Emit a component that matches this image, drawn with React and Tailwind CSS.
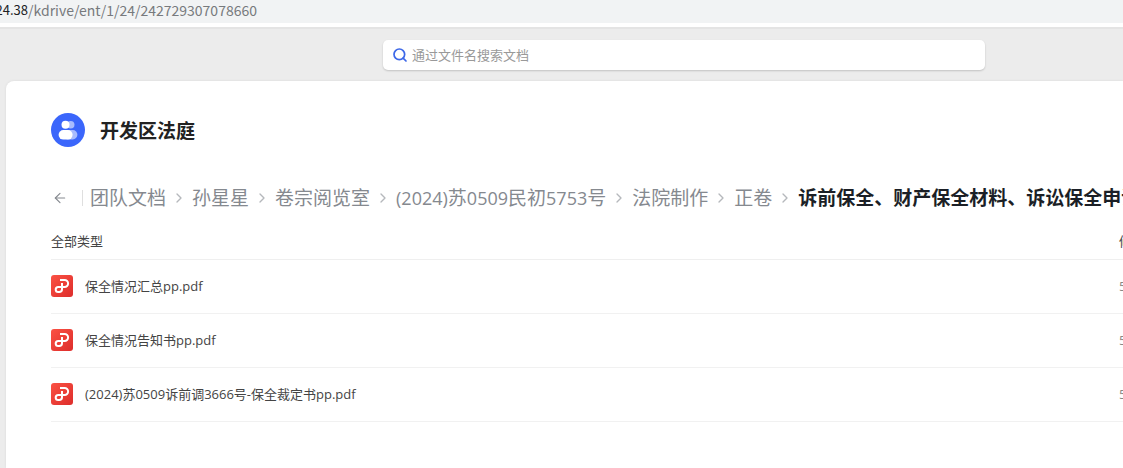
import { Fragment } from "react";
import { ArrowLeft, ChevronRight, Search } from "lucide-react";

const crumbs = ["团队文档", "孙星星", "卷宗阅览室", "(2024)苏0509民初5753号", "法院制作", "正卷"];

const files = [
  { name: "保全情况汇总pp.pdf", modified: "5" },
  { name: "保全情况告知书pp.pdf", modified: "5" },
  { name: "(2024)苏0509诉前调3666号-保全裁定书pp.pdf", modified: "5" },
];

function TeamAvatar() {
  return (
    <svg viewBox="0 0 34 34" className="h-[34px] w-[34px] shrink-0" aria-hidden="true">
      <circle cx="17" cy="17" r="17" fill="#3b66fb" />
      <g fill="#a9bcfd">
        <circle cx="19.7" cy="11.7" r="3.8" />
        <rect x="12" y="17" width="14.4" height="9.4" rx="4.7" />
      </g>
      <g fill="#fff">
        <circle cx="14.5" cy="11.7" r="4" />
        <rect x="7.6" y="17" width="14" height="9.6" rx="4.8" />
      </g>
    </svg>
  );
}

function PdfIcon() {
  return (
    <svg viewBox="0 0 22 22" className="h-[22px] w-[22px] shrink-0" aria-hidden="true">
      <defs>
        <linearGradient id="pdf-red" x1="0" y1="0" x2="1" y2="1">
          <stop offset="0" stopColor="#fb5244" />
          <stop offset="1" stopColor="#dd2d2b" />
        </linearGradient>
      </defs>
      <rect width="22" height="22" rx="3" fill="url(#pdf-red)" />
      <path
        d="M9 5H13.6a3.5 3.5 0 0 1 0 7H7.2a2.5 2.5 0 0 0 0 5H8.2a2.8 2.8 0 0 0 2.8-2.8V8"
        fill="none"
        stroke="#fff"
        strokeWidth="2"
      />
    </svg>
  );
}

// Latin runs sit one size below the Chinese characters around them
function CrumbText({ text }) {
  return text.split(/([\x21-\x7e]+)/).map((part, i) =>
    i % 2 ? (
      <span key={i} className="text-[18px]">{part}</span>
    ) : (
      part
    )
  );
}

export default function App() {
  return (
    <div className="flex min-h-screen flex-col overflow-hidden bg-[#ececec] font-['Open_Sans','Noto_Sans_CJK_SC',sans-serif]">
      <div className="border-b-4 border-white bg-[#f1f3f4]">
        <div className="flex h-[23px] w-[257px] items-start justify-end overflow-hidden font-['Noto_Sans_CJK_SC',sans-serif] text-[14px] leading-5 whitespace-nowrap text-[#777a7d]">
          <span className="text-[13px] text-[#202124]">24.38</span>
          <span>/kdrive/ent/1/24/242729307078660</span>
        </div>
      </div>

      <header className="flex justify-center border-t-2 border-[#e4e4e4] pt-[11px] pb-[11px] pl-[245px]">
        <label className="flex h-[30px] w-full max-w-[602px] items-center gap-1 rounded-[5px] bg-white px-[9px] shadow-[0_1px_2px_rgba(0,0,0,0.18)]">
          <Search className="h-4 w-4 shrink-0 text-[#3d68e8]" strokeWidth={2.6} />
          <input
            type="search"
            aria-label="通过文件名搜索文档"
            placeholder="通过文件名搜索文档"
            className="min-w-0 flex-1 bg-transparent text-[13px] leading-5 outline-none placeholder:text-[#999]"
          />
        </label>
      </header>

      <main className="ml-[6px] flex-1 overflow-hidden rounded-tl-lg bg-white pt-8 pl-[45px] shadow-[0_0_3px_rgba(0,0,0,0.08)]">
        <div className="flex items-center gap-[15px]">
          <TeamAvatar />
          <h1 className="pt-[2px] text-[19px] leading-7 font-bold text-[#222]">开发区法庭</h1>
        </div>

        <nav aria-label="路径" className="mt-[37px] flex h-[28px] items-center text-[19px] leading-7 whitespace-nowrap text-[#85898f]">
          <button type="button" aria-label="返回" className="mr-[14px] ml-[1px] shrink-0">
            <ArrowLeft className="h-4 w-4" strokeWidth={1.7} />
          </button>
          <span className="mr-[7px] h-4 w-px shrink-0 bg-[#dfdfdf]" />
          {crumbs.map((crumb) => (
            <Fragment key={crumb}>
              <a href="#" className="shrink-0">
                <CrumbText text={crumb} />
              </a>
              <ChevronRight className="mx-[5px] h-4 w-4 shrink-0 text-[#b5b8bc]" strokeWidth={2} />
            </Fragment>
          ))}
          <span aria-current="page" className="shrink-0 font-bold text-[#1b1f26]">
            诉前保全、财产保全材料、诉讼保全申请
          </span>
        </nav>

        <table className="mt-[16px] w-[calc(100%+196px)] table-fixed text-left text-[13px] leading-5 text-[#444]">
          <thead>
            <tr className="border-b border-[#efefef]">
              <th className="h-[31px] pb-2 align-bottom font-normal">全部类型</th>
              <th className="h-[31px] w-[200px] pb-2 align-bottom font-normal">修</th>
            </tr>
          </thead>
          <tbody>
            {files.map((file) => (
              <tr key={file.name} className="border-b border-[#f1f1f1]">
                <td className="h-[54px]">
                  <div className="flex items-center gap-3">
                    <PdfIcon />
                    <span>{file.name}</span>
                  </div>
                </td>
                <td className="h-[54px] text-[#888]">{file.modified}</td>
              </tr>
            ))}
          </tbody>
        </table>
      </main>
    </div>
  );
}
